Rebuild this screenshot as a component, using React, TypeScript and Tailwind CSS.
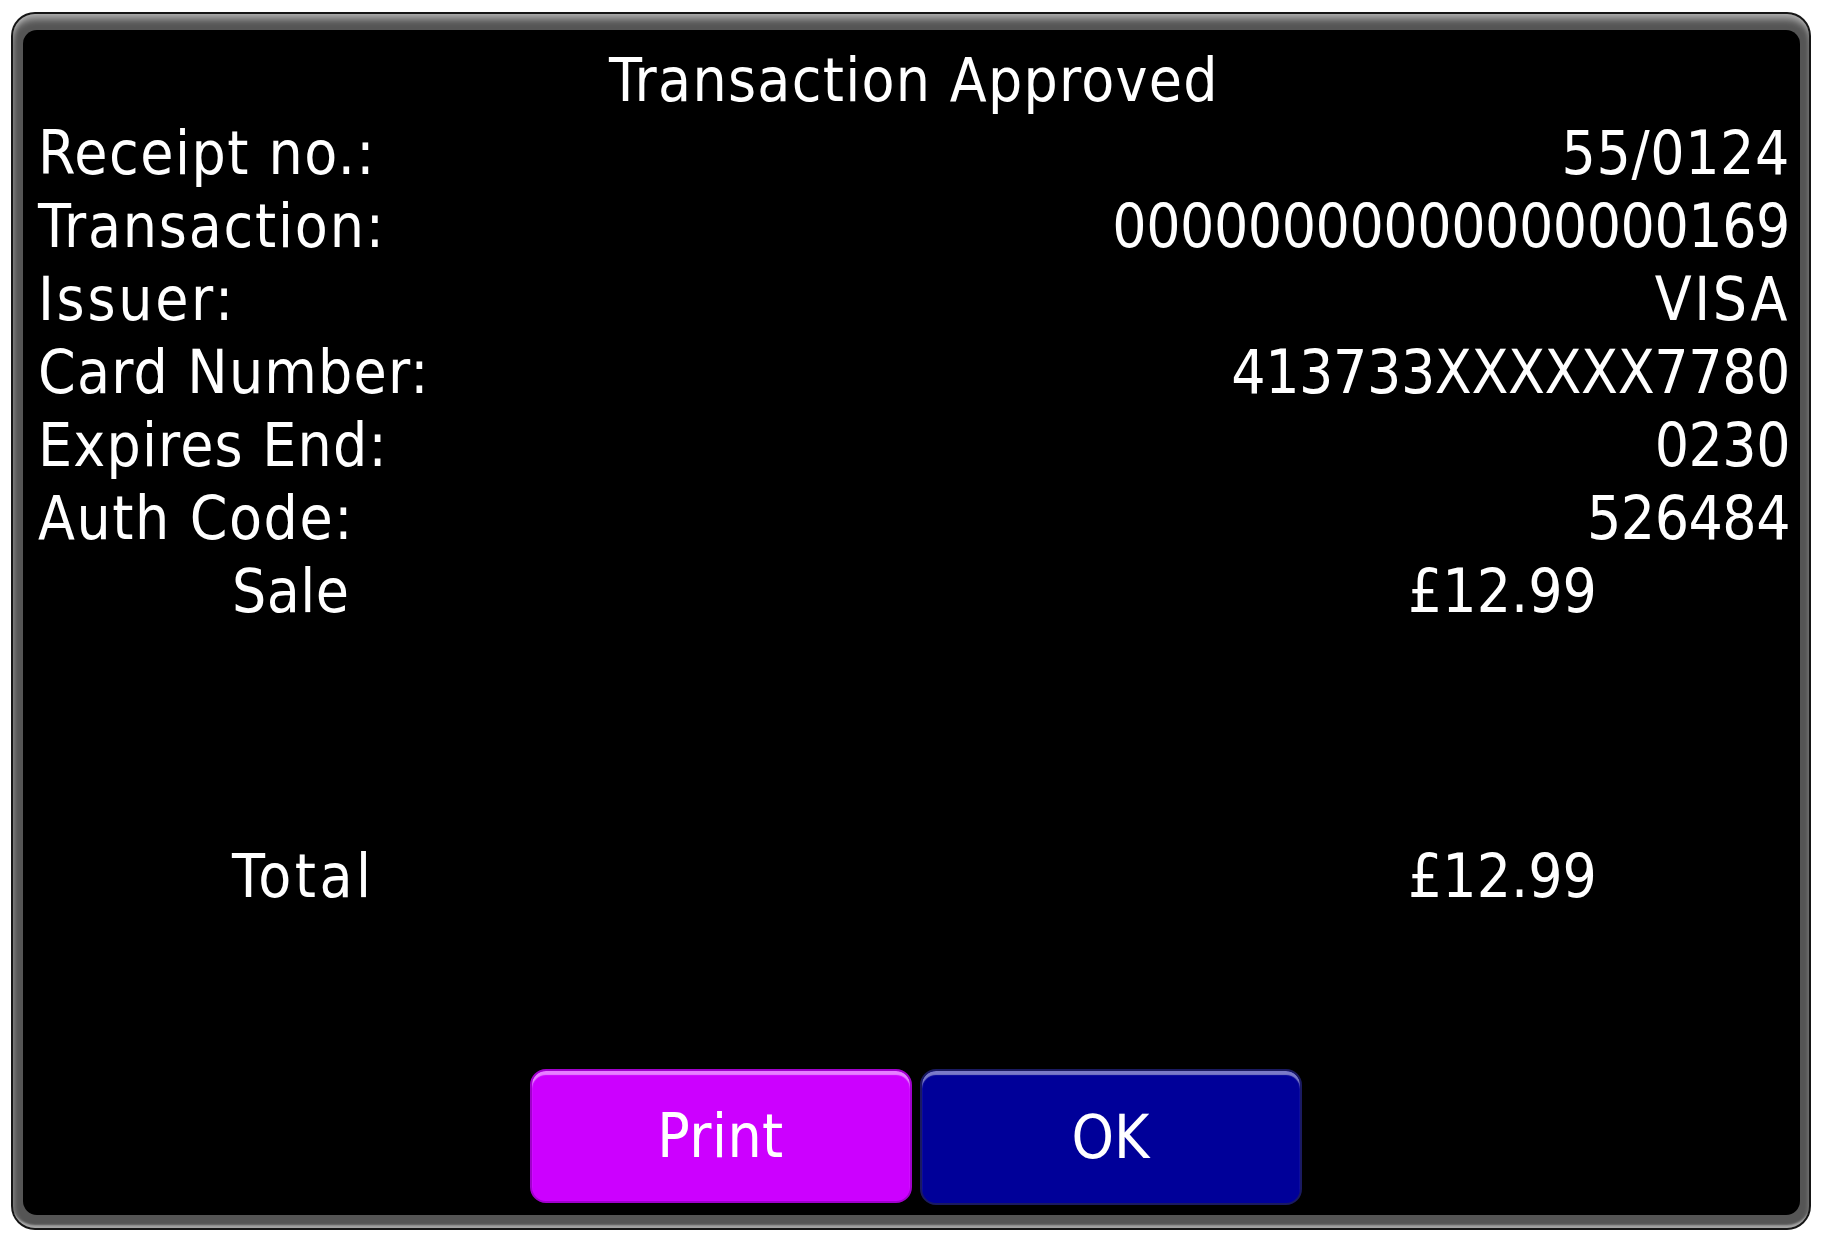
import React from 'react';

// letter spacing per string so the condensed font lands on the reference widths
const rows = [
    { label: 'Receipt no.:', value: '55/0124', lt: 'tracking-[1.5px]', vt: 'tracking-[0.6px]' },
    { label: 'Transaction:', value: '00000000000000000169', lt: 'tracking-[1.8px]', vt: 'tracking-[-0.45px]' },
    { label: 'Issuer:', value: 'VISA', lt: 'tracking-[2.7px]', vt: 'tracking-[2.5px]' },
    { label: 'Card Number:', value: '413733XXXXXX7780', lt: 'tracking-[1.2px]', vt: 'tracking-[-0.4px]' },
    { label: 'Expires End:', value: '0230', lt: 'tracking-[1.2px]', vt: 'tracking-[-0.5px]' },
    { label: 'Auth Code:', value: '526484', lt: 'tracking-[1.6px]', vt: 'tracking-[-0.5px]' },
];

const font = { fontFamily: "'DejaVu Sans Condensed', 'DejaVu Sans', sans-serif" };

const App = () => {
    return (
        <div className="w-[1822px] h-[1238px] bg-white pt-[12px] pl-[11px]" style={font}>
            <div className="w-[1800px] h-[1218px] rounded-[24px] bg-[#151515] p-[2px]">
                <div className="h-full rounded-[22px] bg-[#555555] pt-[16px] pl-[10px] pr-[9px] pb-[13px] shadow-[inset_0_9px_7px_-4px_rgba(255,255,255,0.5),inset_4px_0_4px_-2px_rgba(255,255,255,0.2),inset_-3px_0_4px_-2px_rgba(255,255,255,0.15),inset_0_-6px_2px_-3px_rgba(255,255,255,0.45)]">
                    <div className="h-full rounded-[14px] bg-black pt-[14px] pl-[15px] pr-[10px] text-white text-[60px] leading-[73px] flex flex-col">
                        <div className="text-center tracking-[1.3px]">Transaction Approved</div>
                        {rows.map((row) => (
                            <div key={row.label} className="flex justify-between">
                                <span className={row.lt}>{row.label}</span>
                                <span className={row.vt}>{row.value}</span>
                            </div>
                        ))}
                        <div className="flex">
                            <span className="ml-[194px] w-[1176px] tracking-[0.5px]">Sale</span>
                            <span>£12.99</span>
                        </div>
                        <div className="flex mt-[212px]">
                            <span className="ml-[194px] w-[1176px] tracking-[3.5px]">Total</span>
                            <span>£12.99</span>
                        </div>
                        <div className="flex justify-center gap-[8px] mt-[156px] pl-[3px]">
                            <button className="w-[382px] h-[134px] rounded-[16px] bg-[#cc00ff] border-2 border-[#a000cc] shadow-[inset_0_4px_1px_#e680ff] text-white text-[60px] tracking-[0.5px]">
                                Print
                            </button>
                            <button className="w-[382px] h-[136px] rounded-[16px] bg-[#000099] border-2 border-[#1a1a60] shadow-[inset_0_4px_1px_#7a7ac8] text-white text-[60px]">
                                OK
                            </button>
                        </div>
                    </div>
                </div>
            </div>
        </div>
    );
};

export default App;
